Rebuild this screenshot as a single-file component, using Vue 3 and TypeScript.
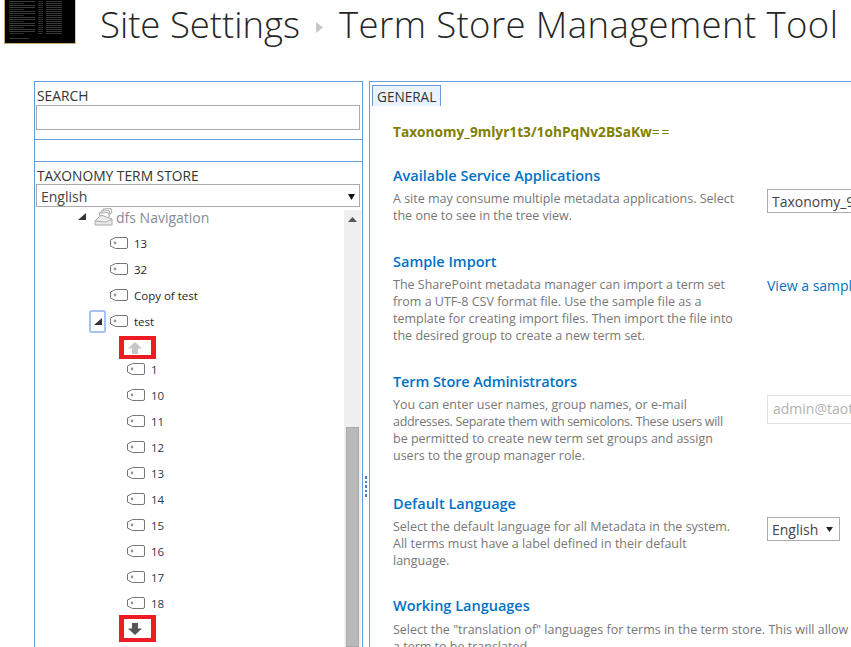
<script setup lang="ts">
const terms = ['1', '10', '11', '12', '13', '14', '15', '16', '17', '18'];
const topTerms = ['13', '32', 'Copy of test'];
const logoRows = Array.from({ length: 17 }, (_, i) => i);
</script>

<template>
  <div class="page">
    <header class="head">
      <div class="logo">
        <span v-for="r in logoRows" :key="r" class="logo-row" :class="{ short: r % 3 === 1 }"></span>
        <span class="logo-foot"></span>
      </div>
      <h1 class="title">
        <span>Site Settings</span>
        <svg class="crumb" width="7" height="11" viewBox="0 0 7 11"><path d="M0 0l7 5.500-7 5.500z" fill="#c8c8c8" /></svg>
        <span class="title-b">Term Store Management Tool</span>
      </h1>
    </header>

    <main class="body">
      <aside class="left">
        <section class="search">
          <div class="label">SEARCH</div>
          <div class="input"></div>
        </section>
        <div class="spacer"></div>
        <section class="store">
          <div class="label">TAXONOMY TERM STORE</div>
          <div class="lang">
            <span>English</span>
            <svg width="7" height="6" viewBox="0 0 7 6"><path d="M0 0h7L3.500 6z" fill="#111" /></svg>
          </div>
          <div class="tree-wrap">
            <div class="tree">
              <div class="row group">
                <svg class="twist" width="8" height="8" viewBox="0 0 8 8"><path d="M8 0v7H0z" fill="#333" /></svg>
                <svg class="stack" width="20" height="19" viewBox="0 0 20 19" fill="#fff" stroke="#aaa">
                  <path d="M9 1l8-.5 1 4-8 4z" />
                  <path d="M7 3l8-.5 1 4-8 4z" />
                  <path d="M5 5l9-.5 1.500 4-8 4z" />
                  <path d="M1 13l6-6 11 4v6H1z" fill="#e8e8e8" />
                  <path d="M1 13l11 1 6-3" />
                </svg>
                <span>dfs Navigation</span>
              </div>
              <div v-for="t in topTerms" :key="t" class="row term lvl1">
                <svg class="tag" width="18" height="12" viewBox="0 0 18 12"><path d="M16 .5H5.500L.5 3v6l5 2.500H16a1.500 1.500 0 0 0 1.500-1.500V2A1.500 1.500 0 0 0 16 .5z" fill="#fff" stroke="#777" /><circle cx="5" cy="6" r="1.400" fill="#999" /></svg>
                <span>{{ t }}</span>
              </div>
              <div class="row term lvl1 open">
                <span class="focus"><svg width="8" height="8" viewBox="0 0 8 8"><path d="M8 0v7H0z" fill="#333" /></svg></span>
                <svg class="tag" width="18" height="12" viewBox="0 0 18 12"><path d="M16 .5H5.500L.5 3v6l5 2.500H16a1.500 1.500 0 0 0 1.500-1.500V2A1.500 1.500 0 0 0 16 .5z" fill="#fff" stroke="#777" /><circle cx="5" cy="6" r="1.400" fill="#999" /></svg>
                <span>test</span>
              </div>
              <div class="arrow-box up">
                <svg width="14" height="12" viewBox="0 0 14 12"><path d="M7 0l7 6.500H10V12H4V6.500H0z" fill="#c6c6c6" /></svg>
              </div>
              <div v-for="t in terms" :key="t" class="row term lvl2">
                <svg class="tag" width="18" height="12" viewBox="0 0 18 12"><path d="M16 .5H5.500L.5 3v6l5 2.500H16a1.500 1.500 0 0 0 1.500-1.500V2A1.500 1.500 0 0 0 16 .5z" fill="#fff" stroke="#777" /><circle cx="5" cy="6" r="1.400" fill="#999" /></svg>
                <span class="num">{{ t }}</span>
              </div>
              <div class="arrow-box down">
                <svg width="14" height="12" viewBox="0 0 14 12"><path d="M7 12L0 5.500h4V0h6v5.500h4z" fill="#555" /></svg>
              </div>
              <div class="row group last">
                <svg class="stack" width="20" height="19" viewBox="0 0 20 19" fill="#fff" stroke="#aaa">
                  <path d="M5 5l9-.5 1.500 4-8 4z" />
                  <path d="M1 13l6-6 11 4v6H1z" fill="#e8e8e8" />
                </svg>
                <span>ibibi Team Site Navigation</span>
              </div>
            </div>
            <div class="scroll">
              <svg class="scroll-up" width="9" height="5" viewBox="0 0 9 5"><path d="M4.500 0L9 5H0z" fill="#555" /></svg>
              <div class="thumb"></div>
            </div>
          </div>
        </section>
      </aside>

      <div class="splitter">
        <i></i><i></i><i></i><i></i><i></i>
      </div>

      <section class="right">
        <div class="tabs"><span class="tab">GENERAL</span></div>
        <div class="content">
          <div class="store-name">Taxonomy_9mlyr1t3/1ohPqNv2BSaKw<span>==</span></div>

          <div class="setting s-apps">
            <div class="info">
              <h2>Available Service Applications</h2>
              <p>A site may consume multiple metadata applications. Select the one to see in the tree view.</p>
            </div>
            <div class="ctrl"><div class="box wide">Taxonomy_9mlyr1t3/1ohPqNv2BSaKw==</div></div>
          </div>

          <div class="setting s-import">
            <div class="info">
              <h2>Sample Import</h2>
              <p>The SharePoint metadata manager can import a term set from a UTF-8 CSV format file. Use the sample file as a template for creating import files. Then import the file into the desired group to create a new term set.</p>
            </div>
            <div class="ctrl"><a class="link">View a sample import file</a></div>
          </div>

          <div class="setting s-admin">
            <div class="info">
              <h2 class="admin-title">Term Store Administrators</h2>
              <p class="lines">You can enter user names, group names, or e-mail<br /><span class="tight">addresses. Separate them with semicolons. These users will</span><br />be permitted to create new term set groups and assign<br />users to the group manager role.</p>
            </div>
            <div class="ctrl"><div class="box people">admin@taotao.onmicrosoft.com</div></div>
          </div>

          <div class="setting s-lang">
            <div class="info">
              <h2>Default Language</h2>
              <p>Select the default language for all Metadata in the system. All terms must have a label defined in their default language.</p>
            </div>
            <div class="ctrl">
              <div class="box select">
                <span>English</span>
                <svg width="7" height="5" viewBox="0 0 7 5"><path d="M0 0h7L3.500 5z" fill="#222" /></svg>
              </div>
            </div>
          </div>

          <div class="setting s-work">
            <h2>Working Languages</h2>
            <p class="full">Select the "translation of" languages for terms in the term store. This will allow a term to be translated.</p>
          </div>
        </div>
      </section>
    </main>
  </div>
</template>

<style>
html, body { margin: 0; background: #fff; overflow: hidden; }
</style>

<style scoped>
.page {
  width: 851px;
  height: 647px;
  overflow: hidden;
  background: #fff;
  font-family: "Open Sans", "Liberation Sans", sans-serif;
  color: #444;
}
.head { display: flex; height: 81px; align-items: flex-start; }
.logo {
  width: 72px;
  height: 44px;
  margin-left: 4px;
  box-sizing: border-box;
  background: #000;
  border-left: 1px solid #c9b06a;
  border-right: 1px solid #d8c79a;
  border-bottom: 1px solid #c9b06a;
  padding: 1px 4px;
  display: flex;
  flex-direction: column;
  gap: 1px;
  flex: none;
}
.logo-row {
  height: 1px;
  background: linear-gradient(90deg, #3a3a3a 0 42%, #000 42% 47%, #303030 47% 55%, #000 55% 59%, #383838 59% 86%, #000 86%);
  flex: none;
}
.logo-row.short {
  background: linear-gradient(90deg, #2c2c2c 0 24%, #000 24% 47%, #303030 47% 55%, #000 55% 59%, #383838 59% 86%, #000 86%);
}
.logo-foot { height: 1px; width: 20px; background: #333; margin-top: 3px; flex: none; }
.title {
  margin: 1px 0 0 24px;
  font-size: 36.500px;
  line-height: 46px;
  font-weight: 300;
  color: #262626;
  white-space: nowrap;
  display: flex;
  align-items: center;
  gap: 16px;
}
.title-b { letter-spacing: 0.4px; }
.crumb { margin-top: 6px; }

.body { display: flex; height: 566px; align-items: stretch; }
.left {
  width: 329px;
  margin-left: 34px;
  box-sizing: border-box;
  border: 1px solid #6a9bd8;
  border-bottom: none;
  flex: none;
  display: flex;
  flex-direction: column;
}
.label { font-size: 13.800px; line-height: 16px; color: #333; margin-left: 2px; }
.search { height: 58px; box-sizing: border-box; padding-top: 6px; border-bottom: 1px solid #6a9bd8; }
.input { height: 25px; margin: 1px 2px 0 1px; box-sizing: border-box; border: 1px solid #ababab; }
.spacer { height: 21px; border-bottom: 1px solid #6a9bd8; }
.store { flex: 1; padding-top: 6px; display: flex; flex-direction: column; min-height: 0; }
.lang {
  height: 23px;
  margin: 0 2px 0 1px;
  box-sizing: border-box;
  border: 1px solid #ababab;
  display: flex;
  align-items: center;
  justify-content: space-between;
  padding: 2px 4px 0 4px;
  font-size: 14px;
  color: #444;
}
.tree-wrap { flex: 1; display: flex; min-height: 0; }
.tree { flex: 1; font-size: 11.500px; color: #262626; }
.row { display: flex; align-items: center; height: 26px; box-sizing: border-box; position: relative; }
.group { height: 22px; padding: 0 0 2px 43px; font-size: 14px; color: #888c96; }
.twist { margin-right: 8px; }
.stack { margin-right: 2px; }
.tag { margin-right: 6px; flex: none; }
.lvl1 { padding-left: 75px; }
.group + .lvl1 { margin-top: 1px; }
.lvl2 { padding-left: 92px; }
.num { color: #263a4a; }
.lvl2:first-of-type .num { color: #0f6aa8; }
.focus {
  position: absolute;
  left: 54px;
  top: 2px;
  width: 17px;
  height: 23px;
  box-sizing: border-box;
  border: 2px solid #a6c4f2;
  border-radius: 2px;
  display: flex;
  align-items: center;
  justify-content: center;
}
.arrow-box {
  width: 37px;
  margin-left: 84px;
  box-sizing: border-box;
  border-style: solid;
  border-color: #ed1c24;
  border-width: 4px 5px;
  display: flex;
  align-items: center;
  justify-content: center;
  padding-right: 5px;
}
.arrow-box.up { margin-top: 2px; height: 23px; margin-bottom: -3px; position: relative; }
.arrow-box.down { margin-top: -1px; height: 27px; position: relative; }
.last { padding-left: 67px; height: 22px; }
.last .stack { margin-right: -4px; }
.scroll {
  width: 17px;
  background: #f0f0f0;
  margin: 3px 1px 0 0;
  position: relative;
  flex: none;
  display: flex;
  flex-direction: column;
  align-items: center;
}
.scroll-up { margin-top: 7px; }
.thumb {
  margin-top: 205px;
  width: 13px;
  flex: 1;
  box-sizing: border-box;
  background: #b9b9b9;
  border: 1px solid #a8a8a8;
}
.splitter {
  width: 6px;
  flex: none;
  display: flex;
  flex-direction: column;
  align-items: center;
  gap: 2px;
  padding-top: 395px;
}
.splitter i { width: 2px; height: 2.500px; background: #4a7fc4; display: block; }
.right {
  flex: 1;
  min-width: 0;
  border: 1px solid #6a9bd8;
  border-bottom: none;
  border-right: none;
  box-sizing: border-box;
}
.tabs { padding: 3px 0 0 2px; height: 21px; }
.tab {
  display: inline-block;
  height: 21px;
  box-sizing: border-box;
  padding: 0 4px;
  background: #eaf3fd;
  border: 1px solid #6a9bd8;
  border-bottom: none;
  font-size: 13.600px;
  line-height: 21px;
  color: #333;
}
.content { padding: 17px 0 0 23px; }
.store-name { font-size: 13.700px; font-weight: 700; line-height: 17px; color: #808000; white-space: nowrap; }
.store-name span { font-weight: 400; letter-spacing: 2px; }
.setting { display: flex; align-items: flex-start; }
.s-apps { margin-top: 26px; height: 86px; }
.s-import { height: 120px; }
.s-admin { height: 122px; }
.s-lang { height: 102px; }
.s-work { display: block; }
.info { width: 374px; flex: none; }
h2 { margin: 0; font-size: 14.500px; line-height: 20px; font-weight: 600; color: #0072c6; white-space: nowrap; }
.admin-title { letter-spacing: -0.1px; }
p { margin: 4px 0 0; width: 345px; font-size: 12.500px; line-height: 17px; color: #777; }
p.lines { white-space: nowrap; }
.tight { letter-spacing: -0.3px; }
p.full { width: 460px; margin-top: 5px; }
.ctrl { font-size: 14px; white-space: nowrap; }
.box { box-sizing: border-box; border: 1px solid #ababab; overflow: hidden; white-space: nowrap; }
.wide { margin-top: 23px; width: 300px; height: 24px; font-size: 14px; line-height: 23px; padding-left: 4px; color: #444; }
.link { display: block; margin-top: 24px; color: #0072c6; font-size: 14px; line-height: 20px; }
.people { margin-top: 23px; width: 300px; height: 29px; font-size: 14px; line-height: 25px; padding-left: 5px; color: #b1b1b1; border-color: #e1e1e1; }
.select {
  margin-top: 23px;
  width: 73px;
  height: 24px;
  display: flex;
  align-items: center;
  justify-content: space-between;
  padding: 0 6px 0 4px;
  font-size: 14px;
  color: #444;
}
</style>
